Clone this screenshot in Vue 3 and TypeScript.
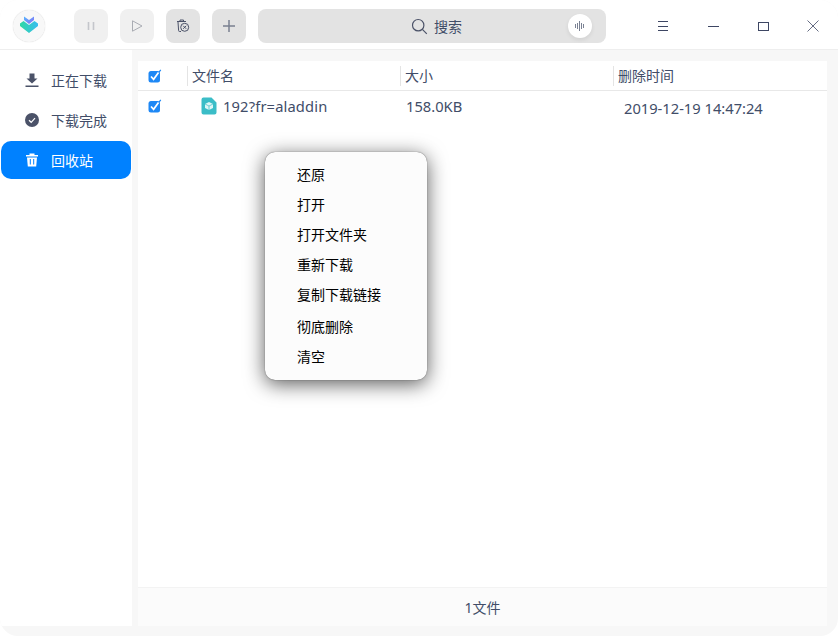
<script setup lang="ts">
interface NavItem {
  label: string;
  icon: 'download' | 'done' | 'trash';
  active?: boolean;
}

const navItems: NavItem[] = [
  { label: '正在下载', icon: 'download' },
  { label: '下载完成', icon: 'done' },
  { label: '回收站', icon: 'trash', active: true },
];

const menuItems = ['还原', '打开', '打开文件夹', '重新下载', '复制下载链接', '彻底删除', '清空'];
</script>

<template>
  <div class="window">
    <header class="titlebar">
      <div class="logo">
        <svg width="24" height="24" viewBox="0 0 24 24">
          <defs>
            <linearGradient id="lgTop" x1="0" y1="0" x2="1" y2="1">
              <stop offset="0" stop-color="#55b7ff" />
              <stop offset="1" stop-color="#8a6cf5" />
            </linearGradient>
            <linearGradient id="lgBottom" x1="0" y1="0" x2="1" y2="0">
              <stop offset="0" stop-color="#2fd8a4" />
              <stop offset="1" stop-color="#38bdf0" />
            </linearGradient>
          </defs>
          <path d="M7 2.5 L12 6 L17 2.5 V6 L12 10 L7 6 Z" fill="url(#lgTop)" />
          <path d="M3 9.5 L6.5 7 L12 11 L17.5 7 L21 9.5 V12 L12 19 L3 12 Z" fill="url(#lgBottom)" />
        </svg>
      </div>

      <div class="tools">
        <button class="tool-btn disabled">
          <svg width="12" height="12" viewBox="0 0 12 12">
            <path d="M3.5 2v8M8.5 2v8" stroke="#c4c6cb" stroke-width="1.6" fill="none" />
          </svg>
        </button>
        <button class="tool-btn disabled">
          <svg width="14" height="14" viewBox="0 0 14 14">
            <path d="M2.5 1.8 L12 7 L2.5 12.2 Z" stroke="#a9acb3" stroke-width="1" fill="none" />
          </svg>
        </button>
        <button class="tool-btn">
          <svg width="14" height="14" viewBox="0 0 14 14" fill="none" stroke="#4b5268" stroke-width="1">
            <path d="M1 2.5h9M4 2.5V1h3.5v1.5" />
            <path d="M2 3l.6 8.5a1 1 0 0 0 1 1h1.4" />
            <circle cx="8.7" cy="8.3" r="4" />
            <path d="M7.2 6.8l3 3M10.2 6.8l-3 3" />
          </svg>
        </button>
        <button class="tool-btn">
          <svg width="14" height="14" viewBox="0 0 14 14">
            <path d="M7 1v12M1 7h12" stroke="#7a8090" stroke-width="1.5" fill="none" />
          </svg>
        </button>
      </div>

      <div class="search">
        <div class="search-label">
          <svg width="17" height="17" viewBox="0 0 17 17" fill="none" stroke="#4b5268" stroke-width="1.2">
            <circle cx="7.2" cy="7.2" r="5.7" />
            <path d="M11.4 11.4l4.4 4.4" />
          </svg>
          <span>搜索</span>
        </div>
        <span class="voice">
          <svg width="10" height="10" viewBox="0 0 10 10">
            <path d="M0.5 3v4M2.5 2v6M4.5 0v10M6.5 2v6M8.5 3v4" stroke="#7b8294" stroke-width="1" fill="none" />
          </svg>
        </span>
      </div>

      <div class="win-btns">
        <button class="win-btn">
          <svg width="12" height="12" viewBox="0 0 12 12">
            <path d="M1 1.5h10M1 6.5h10M1 10.5h10" stroke="#3d4663" stroke-width="1" fill="none" />
          </svg>
        </button>
        <button class="win-btn">
          <svg width="12" height="12" viewBox="0 0 12 12">
            <path d="M1 6.5h11" stroke="#3d4663" stroke-width="1" fill="none" />
          </svg>
        </button>
        <button class="win-btn">
          <svg width="14" height="12" viewBox="0 0 14 12">
            <rect x="2.5" y="2.5" width="10" height="8" stroke="#3d4663" stroke-width="1" fill="none" />
          </svg>
        </button>
        <button class="win-btn">
          <svg width="12" height="12" viewBox="0 0 12 12">
            <path d="M0.5 0.5l11 11M11.5 0.5l-11 11" stroke="#3d4663" stroke-width="0.8" fill="none" />
          </svg>
        </button>
      </div>
    </header>

    <div class="body">
      <aside class="sidebar">
        <div v-for="item in navItems" :key="item.label" class="nav-item" :class="{ active: item.active }">
          <svg v-if="item.icon === 'download'" class="nav-icon" width="16" height="16" viewBox="0 0 16 16">
            <path d="M5.5 1.5h5v5h3L8 11.5 2.5 6.5h3z" fill="#4b5268" />
            <path d="M1.5 13.5h13v1.4h-13z" fill="#4b5268" />
          </svg>
          <svg v-else-if="item.icon === 'done'" class="nav-icon" width="16" height="16" viewBox="0 0 16 16">
            <circle cx="8" cy="8" r="7" fill="#4b5268" />
            <path d="M5 8.2l2.2 2.1L11 6.2" stroke="#fff" stroke-width="1.2" fill="none" />
          </svg>
          <svg v-else class="nav-icon" width="16" height="16" viewBox="0 0 16 16">
            <path d="M2 3h12v1.4H2zM5.5 1.5h5V3h-5z" fill="#fff" />
            <path d="M3 5.4h10l-.8 9.1H3.8z" fill="#fff" />
            <path d="M6.3 7v5.5M9.7 7v5.5" stroke="#0081ff" stroke-width="1" />
          </svg>
          <span>{{ item.label }}</span>
        </div>
      </aside>

      <main class="main">
        <div class="table-head">
          <div class="check-cell">
            <svg width="14" height="14" viewBox="0 0 14 14">
              <rect x="0.5" y="2" width="11.5" height="11.5" rx="2.5" fill="#1e88f5" />
              <path d="M3 7.5l2.6 2.8L10.5 3.5" stroke="#fff" stroke-width="1.7" fill="none" />
              <path d="M11 3.2l1.8-2.4" stroke="#1e88f5" stroke-width="1.2" fill="none" />
            </svg>
          </div>
          <div class="col col-name">文件名</div>
          <div class="col col-size">大小</div>
          <div class="col col-time">删除时间</div>
        </div>
        <div class="row">
          <div class="check-cell">
            <svg width="14" height="14" viewBox="0 0 14 14">
              <rect x="0.5" y="2" width="11.5" height="11.5" rx="2.5" fill="#1e88f5" />
              <path d="M3 7.5l2.6 2.8L10.5 3.5" stroke="#fff" stroke-width="1.7" fill="none" />
              <path d="M11 3.2l1.8-2.4" stroke="#1e88f5" stroke-width="1.2" fill="none" />
            </svg>
          </div>
          <div class="cell-name">
            <svg width="16" height="18" viewBox="0 0 16 18">
              <path d="M2.5 0.5h8l5 5v10a2 2 0 0 1-2 2h-11a2 2 0 0 1-2-2v-13a2 2 0 0 1 2-2z" fill="#3bbdc7" />
              <path d="M8 5l4 2v4l-4 2-4-2V7z" fill="#dff6f6" />
              <path d="M4 7l4 2 4-2M8 9v4" stroke="#3bbdc7" stroke-width="0.7" fill="none" />
            </svg>
            <span class="file-name">192?fr=aladdin</span>
          </div>
          <div class="cell-size">158.0KB</div>
          <div class="cell-time">2019-12-19 14:47:24</div>
        </div>
        <div class="spacer" />
        <footer class="footer">1文件</footer>
      </main>
    </div>

    <ul class="context-menu">
      <li v-for="(text, i) in menuItems" :key="text" :class="{ shifted: i === 5 }">{{ text }}</li>
    </ul>
  </div>
</template>

<style scoped>
.window {
  position: relative;
  width: 838px;
  height: 636px;
  overflow: hidden;
  border-radius: 18px;
  background: #f7f7f7;
  color: #414d68;
  font-family: "Noto Sans", "Noto Sans CJK SC", sans-serif;
  font-size: 14px;
}

.titlebar {
  display: flex;
  align-items: center;
  height: 50px;
  padding: 3px 0 0 13px;
  box-sizing: border-box;
  background: #fff;
  border-bottom: 1px solid #eeeeee;
}

.logo {
  display: flex;
  align-items: center;
  justify-content: center;
  width: 32px;
  height: 32px;
  border-radius: 50%;
  background: #f8f8f8;
  box-shadow: 0 0 1px #c8c8c8;
}

.tools {
  display: flex;
  gap: 12px;
  margin-left: 29px;
}

.tool-btn {
  display: flex;
  align-items: center;
  justify-content: center;
  width: 34px;
  height: 34px;
  padding: 0;
  border: none;
  border-radius: 8px;
  background: #e3e3e3;
}

.tool-btn.disabled {
  background: #f0f0f0;
}

.search {
  position: relative;
  display: flex;
  align-items: center;
  justify-content: center;
  width: 348px;
  height: 34px;
  margin-left: 12px;
  border-radius: 8px;
  background: #e3e3e3;
}

.search-label {
  display: flex;
  align-items: center;
  gap: 6px;
  margin-left: 9px;
}

.voice {
  position: absolute;
  top: 5px;
  right: 14px;
  display: flex;
  align-items: center;
  justify-content: center;
  width: 24px;
  height: 24px;
  border-radius: 50%;
  background: #fff;
  box-shadow: 0 2px 4px rgba(0, 0, 0, 0.08);
}

.win-btns {
  display: flex;
  margin-left: auto;
}

.win-btn {
  display: flex;
  align-items: center;
  justify-content: center;
  width: 50px;
  height: 40px;
  padding: 0;
  border: none;
  background: transparent;
}

.body {
  display: flex;
  height: 576px;
}

.sidebar {
  display: flex;
  flex-direction: column;
  gap: 2px;
  width: 132px;
  padding: 11px 1px 0;
  box-sizing: border-box;
  background: #fff;
}

.nav-item {
  display: flex;
  align-items: center;
  gap: 11px;
  height: 38px;
  padding-left: 23px;
  border-radius: 10px;
}

.nav-item.active {
  background: #0081ff;
  color: #fff;
}

.nav-icon {
  flex: none;
}

.main {
  display: flex;
  flex-direction: column;
  width: 689px;
  margin: 11px 0 0 6px;
  background: #fff;
}

.table-head {
  display: flex;
  align-items: center;
  height: 30px;
  box-sizing: border-box;
  border-bottom: 1px solid #e8e8e8;
  padding-top: 1px;
}

.check-cell {
  display: flex;
  align-items: center;
  width: 49px;
  padding-left: 10px;
  box-sizing: border-box;
}

.col {
  height: 20px;
  padding-left: 4px;
  line-height: 20px;
  box-sizing: border-box;
  border-left: 1px solid #e4e4e4;
}

.col-name,
.col-size {
  width: 213px;
}

.row {
  display: flex;
  align-items: center;
  height: 30px;
  font-size: 14.7px;
}

.row .check-cell {
  margin-top: -1px;
}

.cell-name {
  display: flex;
  align-items: center;
  gap: 6px;
  width: 219px;
  padding-left: 14px;
  box-sizing: border-box;
  margin-top: -1px;
}

.file-name {
  letter-spacing: 0.15px;
}

.cell-size {
  width: 218px;
}

.cell-time {
  margin-top: 3px;
}

.spacer {
  flex: 1;
}

.footer {
  display: flex;
  align-items: center;
  justify-content: center;
  height: 39px;
  border-top: 1px solid #f3f3f3;
  box-sizing: border-box;
  background: #fbfbfb;
}

.context-menu {
  position: absolute;
  top: 152px;
  left: 265px;
  width: 162px;
  height: 228px;
  margin: 0;
  padding: 7.5px 0 0;
  box-sizing: border-box;
  list-style: none;
  border-radius: 10px;
  background: #fcfcfc;
  box-shadow: 0 0 1px rgba(0, 0, 0, 0.7), 0 4px 20px rgba(0, 0, 0, 0.65);
  color: #000;
}

.context-menu li {
  height: 30px;
  padding-left: 32px;
  line-height: 30px;
}

.context-menu li.shifted {
  margin-top: 2px;
}
</style>
